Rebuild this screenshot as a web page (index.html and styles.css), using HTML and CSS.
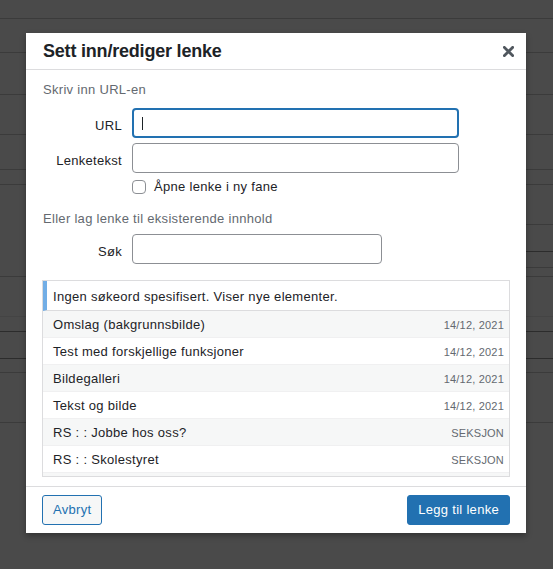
FILE: index.html
```html
<!DOCTYPE html>
<html lang="no">
<head>
<meta charset="utf-8">
<title>Sett inn/rediger lenke</title>
<link rel="stylesheet" href="styles.css">
</head>
<body>
<div class="page">
  <div class="bg r1"></div>
  <div class="bg r2"></div>
  <div class="bg r3"></div>
  <div class="bg r4"></div>
  <div class="bg r5"></div>
  <div class="bg r6"></div>
  <div class="bg r7">
    <div class="rlines">
      <div class="rl rl1"></div>
      <div class="rl rl2"></div>
      <div class="rl rl3"></div>
    </div>
  </div>
  <div class="bg r8"></div>
  <div class="bg r9"></div>
  <div class="bg r10"></div>
  <div class="bg r11"></div>
  <div class="bg r12"></div>
</div>

<div class="modal">
  <div class="head">
    <h1 class="title">Sett inn/rediger lenke</h1>
    <button class="close" aria-label="Lukk">
      <svg width="11" height="11" viewBox="0 0 11 11"><path d="M1.4 1.4 L9.6 9.6 M9.6 1.4 L1.4 9.6" stroke="#50575e" stroke-width="2.8" stroke-linecap="square" fill="none"/></svg>
    </button>
  </div>
  <div class="body">
    <p class="howto first">Skriv inn URL-en</p>
    <div class="field f-url">
      <span class="lab">URL</span>
      <div class="input focus"><span class="caret"></span></div>
    </div>
    <div class="field f-text">
      <span class="lab">Lenketekst</span>
      <div class="input"></div>
    </div>
    <div class="check">
      <span class="box"></span>
      <span class="ctext">Åpne lenke i ny fane</span>
    </div>
    <p class="howto second">Eller lag lenke til eksisterende innhold</p>
    <div class="field f-search">
      <span class="lab">Søk</span>
      <div class="input short"></div>
    </div>
    <div class="results">
      <div class="notice">Ingen søkeord spesifisert. Viser nye elementer.</div>
      <ul class="list">
        <li class="alt"><span class="it">Omslag (bakgrunnsbilde)</span><span class="info">14/12, 2021</span></li>
        <li><span class="it">Test med forskjellige funksjoner</span><span class="info">14/12, 2021</span></li>
        <li class="alt"><span class="it">Bildegalleri</span><span class="info">14/12, 2021</span></li>
        <li><span class="it">Tekst og bilde</span><span class="info">14/12, 2021</span></li>
        <li class="alt"><span class="it">RS : : Jobbe hos oss?</span><span class="info">Seksjon</span></li>
        <li><span class="it">RS : : Skolestyret</span><span class="info">Seksjon</span></li>
        <li class="alt empty"></li>
      </ul>
    </div>
  </div>
  <div class="foot">
    <button class="btn secondary">Avbryt</button>
    <button class="btn primary">Legg til lenke</button>
  </div>
</div>
</body>
</html>
```

FILE: styles.css
```css
html, body {
  margin: 0;
  padding: 0;
}
body {
  width: 553px;
  height: 569px;
  background: #4a4a4a;
  overflow: hidden;
  position: relative;
  font-family: "Liberation Sans", Arial, sans-serif;
}

/* background page (dimmed admin behind the overlay) */
.page {
  display: flex;
  flex-direction: column;
}
.bg {
  box-sizing: border-box;
  border-bottom: 1px solid #3b3b3b;
}
.r1 { height: 19px; }
.r2 { height: 34px; }
.r3 { height: 42px; }
.r4 { height: 40px; }
.r5 { height: 35px; }
.r6 { height: 15px; }
.r7 { height: 92px; border-bottom-color: #3b3b3b; }
.r8 { height: 40px; border-bottom-color: #444444; }
.r9 { height: 15px; border-bottom-color: #2c2c2c; }
.r10 { height: 27px; border-bottom-color: #2c2c2c; }
.r11 { height: 14px; }
.r12 { height: 50px; }
.rlines {
  margin-left: 60%;
  display: flex;
  flex-direction: column;
}
.rl { box-sizing: border-box; border-bottom: 1px solid #3b3b3b; }
.rl1 { height: 40px; }
.rl2 { height: 27px; border-bottom-color: #2c2c2c; }
.rl3 { height: 16px; }

/* modal */
.modal {
  position: absolute;
  left: 26px;
  top: 33px;
  width: 500px;
  height: 500px;
  background: #fff;
  box-shadow: 0 3px 6px rgba(0, 0, 0, 0.3);
  display: flex;
  flex-direction: column;
  color: #1d2327;
}
.head {
  box-sizing: border-box;
  height: 37px;
  border-bottom: 1px solid #dcdcde;
  display: flex;
  align-items: center;
  justify-content: space-between;
  padding: 0 12px 0 17px;
}
.title {
  margin: 0;
  font-size: 18px;
  font-weight: 700;
  letter-spacing: -0.2px;
  line-height: 36px;
}
.close {
  border: 0;
  background: none;
  padding: 0;
  width: 11px;
  height: 11px;
  display: block;
}
.close svg { display: block; }

.body {
  flex: 1;
  padding: 10px 16px 0 16px;
  display: flex;
  flex-direction: column;
  font-size: 13px;
  letter-spacing: 0.3px;
}
.howto {
  margin: 0;
  color: #646970;
  line-height: 20px;
  padding-left: 1px;
}
.second { margin-top: 14px; }

.field {
  display: flex;
  align-items: flex-start;
}
.f-url { margin-top: 8px; }
.f-text { margin-top: 5px; }
.f-search { margin-top: 5px; }
.lab {
  box-sizing: border-box;
  width: 90px;
  padding-right: 10px;
  padding-top: 8px;
  text-align: right;
  line-height: 20px;
}
.input {
  box-sizing: border-box;
  width: 327px;
  height: 30px;
  border: 1px solid #8c8f94;
  border-radius: 4px;
  background: #fff;
}
.input.short { width: 250px; }
.input.focus {
  border: 2px solid #2271b1;
  padding: 7px 0 0 8px;
}
.caret {
  display: block;
  width: 1px;
  height: 13px;
  background: #1d2327;
}

.check {
  margin-top: 6px;
  padding-left: 90px;
  height: 16px;
  display: flex;
  align-items: center;
}
.box {
  box-sizing: border-box;
  width: 14px;
  height: 14px;
  border: 1px solid #8c8f94;
  border-radius: 4px;
  background: #fff;
  margin-right: 8px;
}
.ctext { line-height: 16px; }

.results {
  margin-top: 16px;
  box-sizing: border-box;
  height: 197px;
  border: 1px solid #dcdcde;
  overflow: hidden;
}
.notice {
  box-sizing: border-box;
  height: 30px;
  border-left: 4px solid #72aee6;
  border-bottom: 1px solid #dcdcde;
  padding: 2px 6px 0 6px;
  line-height: 27px;
}
.list {
  list-style: none;
  margin: 0;
  padding: 0;
}
.list li {
  box-sizing: border-box;
  height: 27px;
  border-bottom: 1px solid #f0f0f1;
  padding: 5px 5px 3px 10px;
  line-height: 18px;
  display: flex;
  justify-content: space-between;
  align-items: baseline;
}
.list li.alt { background: #f6f7f7; }
.info {
  font-size: 11px;
  color: #646970;
  text-transform: uppercase;
  letter-spacing: 0.2px;
}

.foot {
  box-sizing: border-box;
  height: 47px;
  border-top: 1px solid #dcdcde;
  padding: 8px 16px;
  display: flex;
  justify-content: space-between;
}
.btn {
  box-sizing: border-box;
  height: 30px;
  padding: 0 10px;
  border-radius: 3px;
  font-family: "Liberation Sans", Arial, sans-serif;
  font-size: 13px;
  letter-spacing: 0.3px;
  line-height: 28px;
  border: 1px solid #2271b1;
}
.secondary {
  background: #f6f7f7;
  color: #2271b1;
}
.primary {
  background: #2271b1;
  color: #fff;
}
```
